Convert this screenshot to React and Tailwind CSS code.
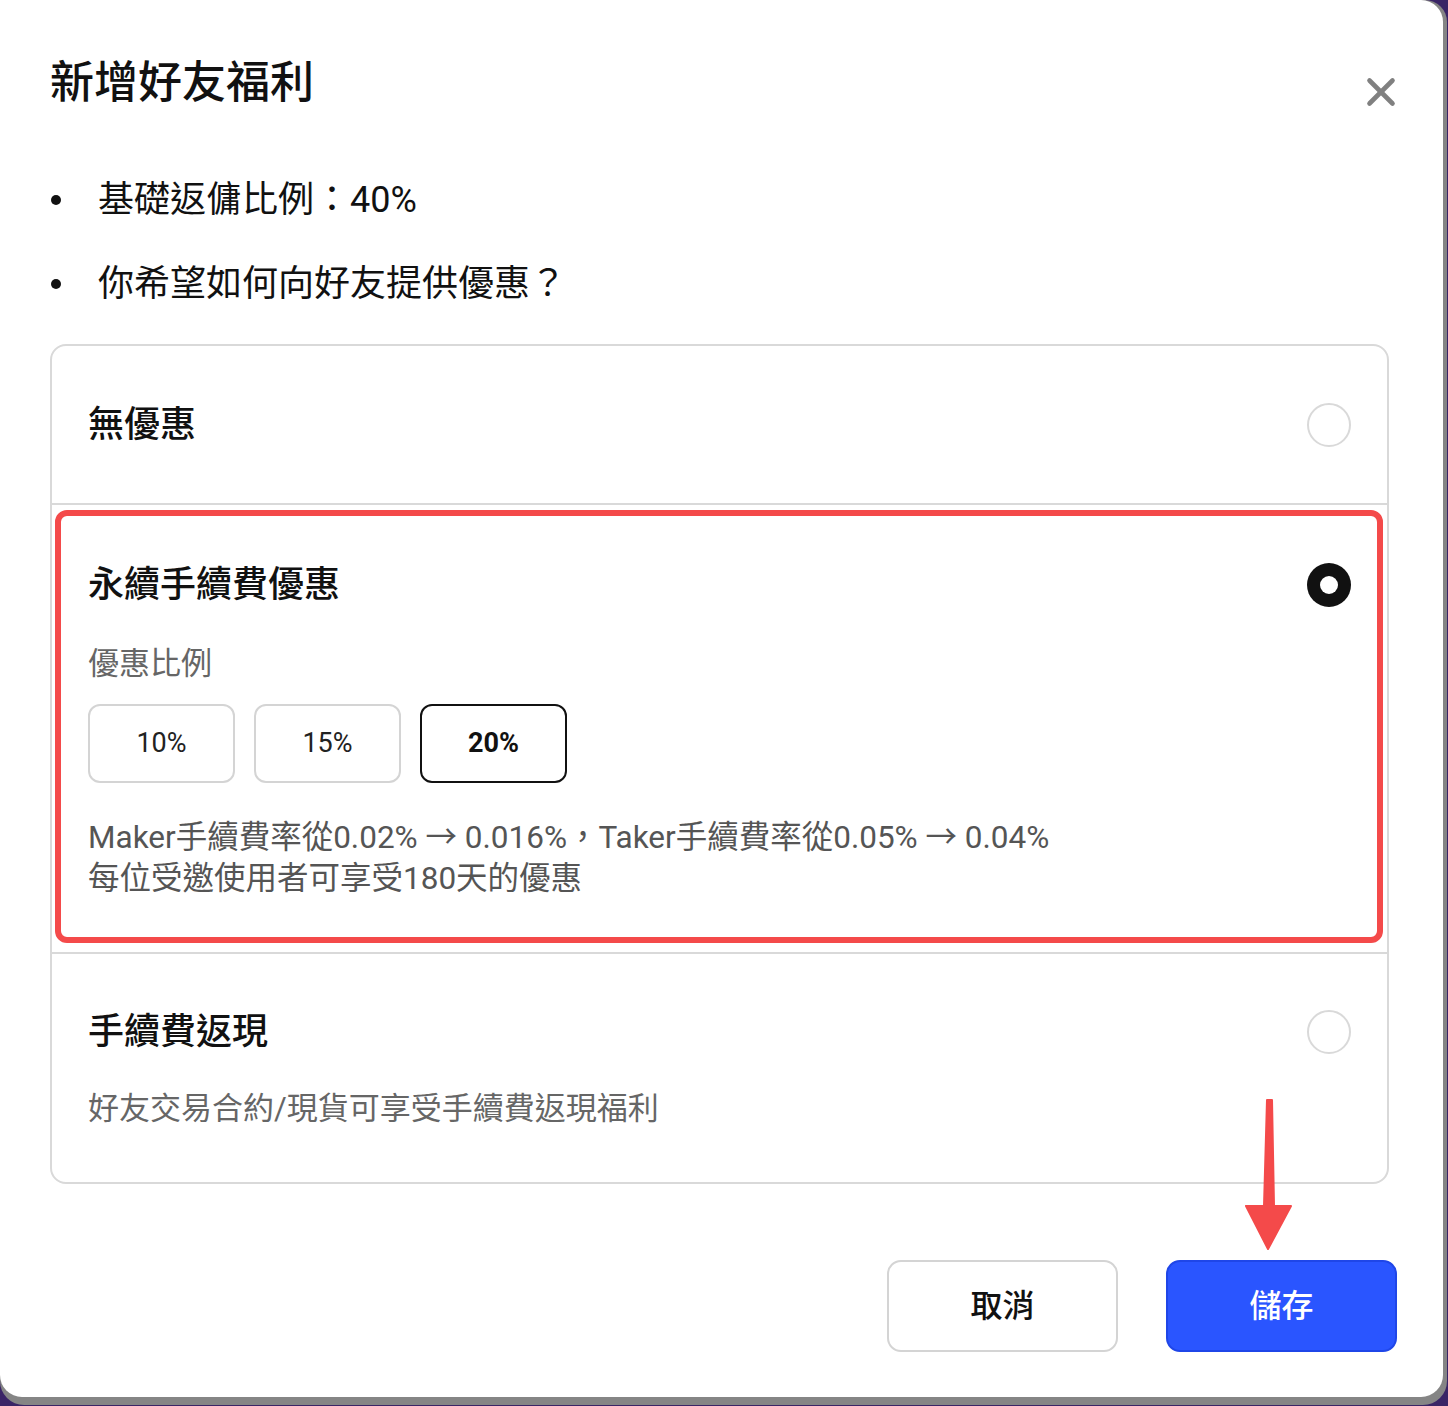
import { X } from 'lucide-react';

function Radio({ checked }) {
    if (checked) {
        return (
            <div className="w-[44px] h-[44px] rounded-full bg-[#111111] flex items-center justify-center shrink-0">
                <div className="w-[18px] h-[18px] rounded-full bg-white"></div>
            </div>
        );
    }
    return <div className="w-[44px] h-[44px] rounded-full border-2 border-[#d9d9d9] bg-white shrink-0"></div>;
}

function RateButton({ label, active }) {
    return (
        <button
            className={
                active
                    ? 'w-[147px] h-[79px] rounded-[12px] border-2 border-[#111111] text-[27px] font-bold text-[#111111] bg-white'
                    : 'w-[147px] h-[79px] rounded-[12px] border-2 border-[#d4d4d4] text-[27px] text-[#222222] bg-white'
            }
        >
            {label}
        </button>
    );
}

export default function App() {
    return (
        <div className="w-[1448px] h-[1406px] bg-[#3a2466] overflow-hidden font-['Roboto','Noto_Sans_CJK_TC',sans-serif]">
            <div className="w-[1447px] h-[1405px] bg-[#858585] rounded-tr-[22px] rounded-b-[24px]">
                <div className="relative w-[1443px] h-[1397px] bg-white rounded-tr-[22px] rounded-b-[22px] pl-[50px] pr-[46px] pt-[53px]">
                    {/* Header */}
                    <div className="flex items-start justify-between">
                        <h1 className="text-[44px] leading-[60px] font-medium text-[#111111]">新增好友福利</h1>
                        <button className="mt-[16px] mr-[-7px] text-[#808080]">
                            <X size={46} strokeWidth={2.4} />
                        </button>
                    </div>

                    {/* Bullets */}
                    <ul className="mt-[60px] flex flex-col gap-[34px] text-[36px] leading-[50px] text-[#111111]">
                        <li className="flex items-center">
                            <span className="w-[10px] h-[10px] rounded-full bg-[#111111] ml-[1px] mr-[37px]"></span>
                            基礎返傭比例：40%
                        </li>
                        <li className="flex items-center">
                            <span className="w-[10px] h-[10px] rounded-full bg-[#111111] ml-[1px] mr-[37px]"></span>
                            你希望如何向好友提供優惠？
                        </li>
                    </ul>

                    {/* Options */}
                    <div className="mt-[35px] w-[1339px] border-2 border-[#d9d9d9] rounded-[16px] flex flex-col">
                        <div className="h-[157px] px-[36px] flex items-center justify-between">
                            <span className="text-[36px] font-medium text-[#111111]">無優惠</span>
                            <Radio />
                        </div>

                        <div className="relative border-t-2 border-[#d9d9d9] px-[36px] pt-[55px] pb-[53px]">
                            <div className="flex items-center justify-between h-[50px]">
                                <span className="text-[36px] font-medium text-[#111111]">永續手續費優惠</span>
                                <Radio checked />
                            </div>
                            <div className="mt-[32px] text-[31px] leading-[44px] text-[#666666]">優惠比例</div>
                            <div className="mt-[18px] flex gap-[19px]">
                                <RateButton label="10%" />
                                <RateButton label="15%" />
                                <RateButton label="20%" active />
                            </div>
                            <div className="mt-[34px] text-[31.5px] leading-[41px] text-[#555555]">
                                <p>Maker手續費率從0.02% → 0.016%，Taker手續費率從0.05% → 0.04%</p>
                                <p>每位受邀使用者可享受180天的優惠</p>
                            </div>
                            {/* highlight annotation */}
                            <div className="absolute top-[5px] left-[3px] right-[4px] bottom-[9px] border-[6px] border-[#f44a4a] rounded-[12px] pointer-events-none"></div>
                        </div>

                        <div className="border-t-2 border-[#d9d9d9] px-[36px] pt-[53px] pb-[51px]">
                            <div className="flex items-center justify-between h-[50px]">
                                <span className="text-[36px] font-medium text-[#111111]">手續費返現</span>
                                <Radio />
                            </div>
                            <div className="mt-[30px] text-[31px] leading-[44px] text-[#666666]">好友交易合約/現貨可享受手續費返現福利</div>
                        </div>
                    </div>

                    {/* Footer */}
                    <div className="mt-[76px] flex justify-end gap-[48px]">
                        <button className="w-[231px] h-[92px] rounded-[14px] border-2 border-[#d4d4d4] bg-white text-[32px] font-medium text-[#111111]">
                            取消
                        </button>
                        <button className="w-[231px] h-[92px] rounded-[14px] border-2 border-[#1f46e8] bg-[#2a55ff] text-[32px] font-medium text-white">
                            儲存
                        </button>
                    </div>

                    {/* red arrow annotation */}
                    <svg className="absolute left-[1240px] top-[1096px] pointer-events-none" width="60" height="160" viewBox="0 0 60 160">
                        <polygon points="27,4 32,4 34,110 51,110 28,153 6,110 24,110" fill="#f44a4a" stroke="#f44a4a" strokeWidth="2" strokeLinejoin="round" />
                    </svg>
                </div>
            </div>
        </div>
    );
}
